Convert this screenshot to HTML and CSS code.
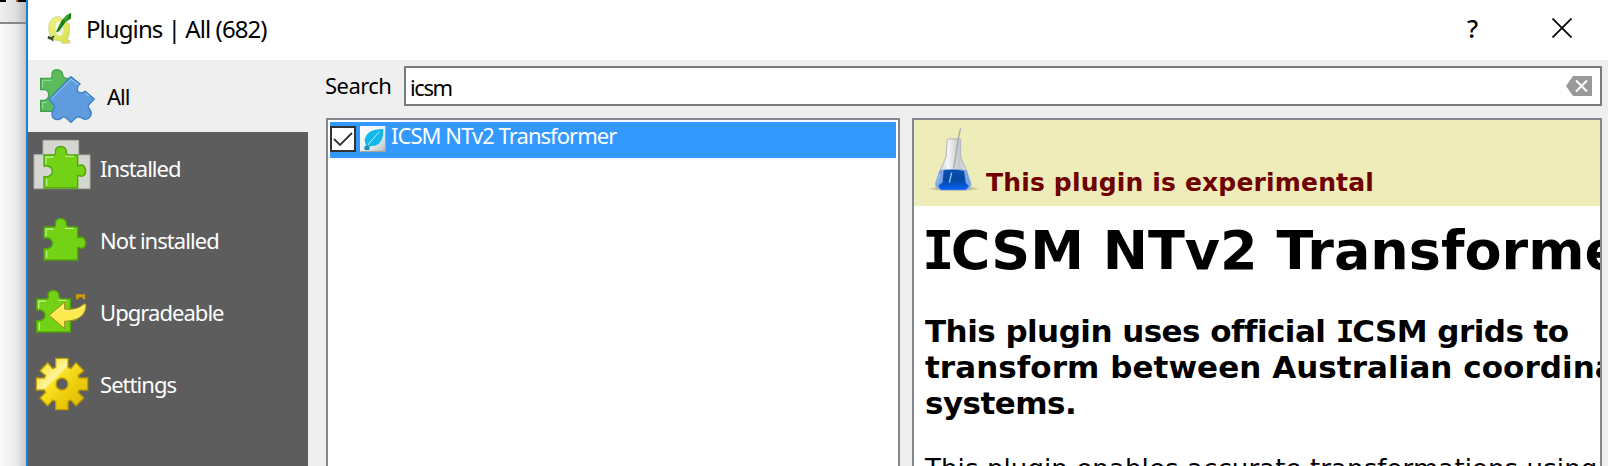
FILE: index.html
```
<!DOCTYPE html>
<html lang="en">
<head>
<meta charset="utf-8">
<title>Plugins | All (682)</title>
<link rel="stylesheet" href="styles.css">
</head>
<body>
<div class="desktop">
  <div class="behind"><div class="behind-top"><i class="mark m1"></i><i class="mark m2"></i></div></div>
  <div class="window">
    <header class="titlebar">
      <svg class="logo" viewBox="140 30 80 105">
        <defs><linearGradient id="qg" x2="1" y2="1"><stop stop-color="#eff285"/><stop offset="1" stop-color="#d8e14b"/></linearGradient></defs>
        <path d="M180 50C158 50 148 64 148 86C148 110 160 122 181 122L190 130L211 129L211 122L202 118C211 106 211 91 209 72L194 62Z" fill="url(#qg)" stroke="#ccd48b" stroke-width="3"/>
        <path d="M180 63C169 63 168 73 168 88C168 102 173 108 182 108C191 106 192 94 191 82L188 72Z" fill="#f3f4e6"/>
        <path d="M169 97L186 62L201 46L215 38L214 56L199 65L179 94Z" fill="#168411"/>
        <path d="M196 52L208 44L205 56L192 65Z" fill="#43a83b"/>
        <path d="M146 107L154 111L166 106L161 116L162 125L154 119L144 116Z" fill="#38522e"/>
      </svg>
      <h1 class="title"><span>Plugins | All (682)</span></h1>
      <span class="help">?</span>
      <svg class="close" viewBox="0 0 20 20"><path d="M.5.5L19.5 19.5M19.5.5L.5 19.5" stroke="#000" stroke-width="1.7"/></svg>
    </header>
    <div class="content">
      <nav class="sidebar">
        <div class="item active">
          <svg viewBox="24 0 210 216">
            <path d="M62 55H93Q98 51 96 45Q95 30 110 29Q127 30 128 45Q129 51 136 55H160V154H62V121H72Q86 119 86 104Q86 91 74 89H62Z" fill="#5cbb5b" stroke="#40a24c" stroke-width="4"/>
            <path d="M68 82V61H94M68 146V127H81" fill="none" stroke="#9bdaa7" stroke-width="3"/>
            <path d="M153 50L180 72Q168 82 174 95Q183 103 196 94L223 117L208 133Q200 138 210 149Q218 162 208 173Q195 183 181 172Q172 167 165 176L153 187L141 176Q131 166 124 175Q109 183 99 173Q92 160 101 147Q108 139 98 132L87 118Z" fill="#5e9cdd" stroke="#3d7fca" stroke-width="4"/>
            <path d="M94 116L153 58L176 75M196 101L207 108" fill="none" stroke="#a5cff3" stroke-width="3"/>
          </svg><span class="all">All</span>
        </div>
        <div class="item">
          <svg viewBox="24 216 210 216">
            <path d="M69 241H176V285H210V386H42V284H69Z" fill="#d4d6d0" stroke="#aeb0ab" stroke-width="3"/>
            <g id="piece">
              <path d="M72 285H103Q109 281 106 275Q106 260 122 259Q139 261 139 275Q138 281 144 285H173V317L186 315Q197 319 197 334Q196 348 184 349L173 346V384H72V350H82Q97 347 97 334Q97 322 84 318H72Z" fill="#73d216" stroke="#4fa407" stroke-width="4"/>
              <path d="M78 313V291H101M136 289H162M80 378V356" fill="none" stroke="#b9ef85" stroke-width="4"/>
            </g>
          </svg><span>Installed</span>
        </div>
        <div class="item">
          <svg viewBox="24 216 210 216"><use href="#piece"/></svg><span>Not installed</span>
        </div>
        <div class="item">
          <svg viewBox="24 228 210 216">
            <use href="#piece" x="-22" y="12"/>
            <path d="M168 298V283H195V298H188V292H176V298Z" fill="#c99b08"/>
            <path d="M88 346L134 306V327Q169 332 192 312H198Q200 361 134 364V386Z" fill="#fce94f" stroke="#a48b22" stroke-width="3"/>
            <path d="M97 346L130 317V333Q165 338 193 318" fill="none" stroke="#fff081" stroke-width="3"/>
          </svg><span>Upgradeable</span>
        </div>
        <div class="item">
          <svg viewBox="24 24 210 216">
            <defs><linearGradient id="gear" x2="1" y2="1"><stop offset=".15" stop-color="#f9e53d"/><stop offset=".36" stop-color="#fff4a1"/><stop offset=".4" stop-color="#f9e226"/><stop offset=".65" stop-color="#eccb0b"/><stop offset="1" stop-color="#d8b900"/></linearGradient></defs>
            <path fill-rule="evenodd" d="M107 55H144V82L153 86L168 68L191 92L174 107L178 114H203V150H178L174 157L191 174L168 197L153 180L144 184V209H107V184L98 180L83 197L60 174L77 157L73 150H49V114H73L77 107L60 92L83 68L98 86L107 82ZM144 132A18 18 0 1 0 108 132A18 18 0 1 0 144 132Z" fill="url(#gear)" stroke="#bd9c03" stroke-width="4"/>
          </svg><span>Settings</span>
        </div>
      </nav>
      <main class="main">
        <div class="search">
          <label for="query"><span>Search</span></label>
          <div class="field"><span id="query" class="query">icsm</span>
            <svg class="clear" viewBox="0 0 26 20"><path d="M0 10L7 0H26V20H7Z" fill="#999"/><path d="M10 4.500L21 15.500M21 4.500L10 15.500" stroke="#fff" stroke-width="2"/></svg>
          </div>
        </div>
        <div class="panes">
          <section class="list">
            <div class="row">
              <svg class="check" viewBox="0 0 26 26"><path d="M1 1H25V25H1Z" fill="#fff" stroke="#333" stroke-width="2"/><path d="M4 13L10 19L22 7" fill="none" stroke="#333" stroke-width="1.8"/></svg>
              <svg class="feather" viewBox="150 213 78 78">
                <defs><linearGradient id="paper" x2="1" y2="1"><stop stop-color="#fff"/><stop offset=".6" stop-color="#e8eeee"/><stop offset="1" stop-color="#b5b9b9"/></linearGradient></defs>
                <path d="M150 213H228V291H150Z" fill="url(#paper)"/><path d="M151 289H227V214" fill="none" stroke="#999" stroke-width="3"/>
                <path d="M168 272Q158 248 176 233Q191 222 220 222Q221 253 206 267Q193 276 172 273Z" fill="#10b9e9"/>
                <path d="M166 284L176 267L208 230" fill="none" stroke="#b5edfb" stroke-width="3"/>
                <path d="M163 275L174 270L179 276L178 285H164Z" fill="#1590c2"/>
              </svg>
              <span class="row-name">ICSM NTv2 Transformer</span>
            </div>
          </section>
          <section class="details">
            <div class="notice">
              <svg class="flask" viewBox="110 80 165 195">
                <defs><radialGradient id="shade"><stop stop-color="#444"/><stop offset="1" stop-color="#666" stop-opacity="0"/></radialGradient><linearGradient id="glass"><stop stop-color="#bbb"/><stop offset=".35" stop-color="#f5f6f7"/><stop offset=".65" stop-color="#c5c8ce"/><stop offset="1" stop-color="#e7e9ed"/></linearGradient><linearGradient id="liquid" x2="0" y2="1"><stop stop-color="#0750ae"/><stop offset=".5" stop-color="#0648a0"/><stop offset="1" stop-color="#0561f4"/></linearGradient></defs>
                <ellipse cx="194" cy="265" rx="79" ry="8" fill="url(#shade)"/>
                <path d="M174 116H214V170L229 204L246 253Q245 268 228 269H157Q138 267 138 250L154 206L170 170Z" fill="url(#glass)" stroke="#b2b7bc" stroke-width="3"/>
                <path d="M150 210Q192 202 232 210L245 250Q243 266 229 268H157Q141 266 139 250Z" fill="#7ba4e8"/>
                <path d="M163 210Q193 205 224 212L229 247L239 258L229 268H154L147 256L160 246Z" fill="url(#liquid)"/>
                <path d="M214 84L207 115L193 205" fill="none" stroke="#a4a8ac" stroke-width="4"/>
                <path d="M187 217L180 247M151 222L144 248" stroke="#91c6ff" stroke-width="4"/>
              </svg>
              <strong>This plugin is experimental</strong>
            </div>
            <h2><span class="slab">I</span>CSM NTv2 Transformer</h2>
            <h3>This plugin uses official <span class="slab">I</span>CSM grids to<br><span class="wide">transform between Australian coordinate</span><br>systems.</h3>
            <p>This plugin enables accurate transformations using</p>
          </section>
        </div>
      </main>
    </div>
  </div>
</div>
</body>
</html>
```
FILE: styles.css
```
* { box-sizing: border-box; }
body { margin: 0; overflow: hidden; font-family: "Noto Sans", sans-serif; font-size: 22px; color: #000; }
svg { display: block; flex: none; }
.desktop { display: flex; width: 1608px; height: 466px; overflow: hidden; }
.behind { width: 26px; flex: none; background: linear-gradient(90deg, #fbfbfb, #e9e9e9 65%, #c8c8c8); }
.behind-top { height: 24px; display: flex; justify-content: space-between; border-bottom: 2px solid #85858b; background: linear-gradient(90deg, #efefef, #dfdfdf 60%, #bdbdbd); }
.mark { height: 2px; background: #000; }
.m1 { width: 6px; }
.m2 { width: 10px; border-left: 2px solid #b9681b; }
.window { flex: 1; min-width: 0; border-left: 2px solid #1683d8; background: #efefef; display: flex; flex-direction: column; }
.titlebar { height: 60px; flex: none; display: flex; align-items: center; background: #fff; padding-left: 18px; }
.logo { width: 27px; height: 35px; margin-top: -5px; }
.title { font-size: 24px; line-height: 30px; font-weight: 400; margin: -3px auto 0 13px; white-space: nowrap; letter-spacing: -.92px; }
.help { font-size: 25px; line-height: 30px; width: 13px; margin-right: 72px; margin-top: -5px; font-weight: 500; }
.close { width: 20px; height: 20px; margin-right: 36px; margin-top: -4px; }
.content { display: flex; flex: 1; min-height: 0; }
.sidebar { width: 280px; flex: none; background: #5d5d5d; color: #fff; }
.item { height: 72px; display: flex; align-items: center; }
.item svg { width: 70px; height: 72px; }
.item span { white-space: nowrap; line-height: 30px; letter-spacing: -.95px; margin-left: 2px; }
.item .all { margin-left: 9px; }
.active { background: #efefef; color: #000; }
.main { flex: 1; min-width: 0; display: flex; flex-direction: column; padding: 6px 6px 0 18px; }
.search { display: flex; height: 40px; flex: none; }
label { width: 79px; margin-left: -1px; padding-top: 4px; line-height: 30px; letter-spacing: -.55px; }
.field { flex: 1; display: flex; align-items: center; justify-content: space-between; background: #fff; border: 2px solid #7a7a7a; padding: 0 8px 0 4px; }
.query { line-height: 30px; letter-spacing: -1.4px; padding-top: 2px; }
.clear { width: 26px; height: 20px; }
.panes { display: flex; gap: 12px; margin-top: 12px; flex: 1; min-height: 0; }
.list { width: 574px; flex: none; background: #fff; border: 2px solid #828790; border-bottom: 0; padding: 2px; }
.row { height: 36px; display: flex; background: #3399ff; color: #fff; }
.check { width: 26px; height: 26px; margin: 4px 4px 0 0; }
.feather { width: 26px; height: 26px; margin-top: 4px; }
.row-name { line-height: 30px; margin: -2px 0 0 5px; letter-spacing: -.95px; white-space: nowrap; }
.details { flex: 1; min-width: 0; overflow: hidden; background: #fff; border: 2px solid #828790; border-bottom: 0; white-space: nowrap; font-family: "DejaVu Sans", sans-serif; }
.notice { height: 86px; display: flex; background: #eeecb9; color: #700000; padding-left: 12px; }
.flask { width: 55px; height: 65px; margin-top: 7px; }
.notice strong { font-size: 25px; line-height: 30px; margin: 48px 0 0 5px; letter-spacing: .17px; }
/* capital I drawn with slab ends */
.slab { font-family: "DejaVu Sans Mono", monospace; line-height: 1; letter-spacing: -.07em; }
h2 { font-size: 54px; line-height: 64px; margin: 13px 0 0 8px; letter-spacing: 0; }
h3 { font-size: 31px; line-height: 36px; margin: 30px 0 0 11px; letter-spacing: -.54px; }
.wide { letter-spacing: .05px; }
p { font-size: 26px; line-height: 32px; margin: 32px 0 0 11px; letter-spacing: .1px; }
```
